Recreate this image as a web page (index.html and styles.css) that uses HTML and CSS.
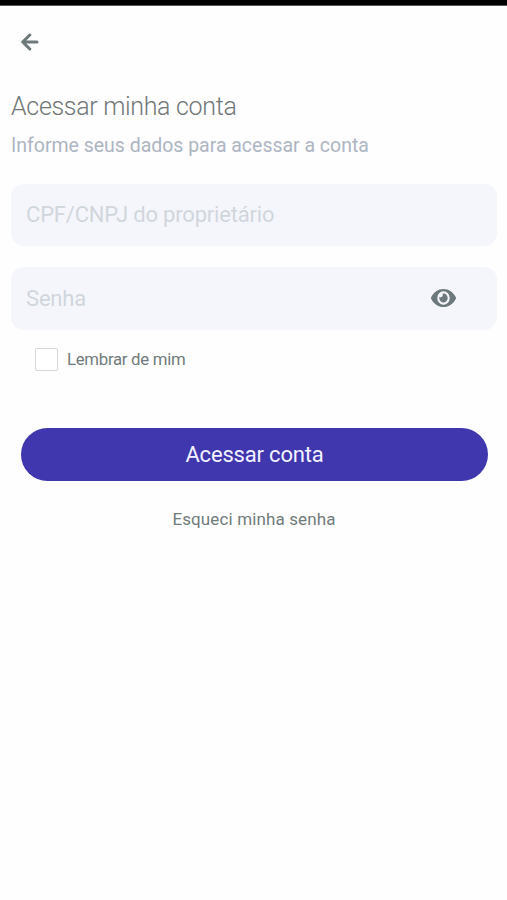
FILE: index.html
```html
<!DOCTYPE html>
<html lang="pt-BR">
<head>
<meta charset="utf-8">
<title>Acessar minha conta</title>
<link rel="stylesheet" href="styles.css">
</head>
<body>
<div class="status-bar"></div>
<main class="screen">
  <button class="back" type="button" aria-label="Voltar">
    <svg width="18" height="18" viewBox="0 0 18 18" fill="none" stroke="currentColor" stroke-width="3" stroke-linecap="round" stroke-linejoin="round"><path d="M8.8 2 1.7 9l7.1 7M2 9h14"/></svg>
  </button>
  <h1 class="title"><span>Acessar minha conta</span></h1>
  <p class="subtitle"><span>Informe seus dados para acessar a conta</span></p>
  <form class="form">
    <div class="field"><input class="input" type="text" placeholder="CPF/CNPJ do proprietário"></div>
    <div class="field field-password">
      <input class="input" type="password" placeholder="Senha">
      <button class="reveal" type="button" aria-label="Mostrar senha">
        <svg width="25" height="24" viewBox="0 0 576 512" preserveAspectRatio="none" fill="currentColor"><path d="M572.52 241.4C518.29 135.59 410.93 64 288 64S57.68 135.64 3.48 241.41a32.35 32.35 0 0 0 0 29.19C57.71 376.41 165.07 448 288 448s230.32-71.64 284.52-177.41a32.35 32.35 0 0 0 0-29.19zM288 400a144 144 0 1 1 144-144 143.93 143.93 0 0 1-144 144zm0-240a95.31 95.31 0 0 0-25.31 3.79 47.85 47.85 0 0 1-66.9 66.9A95.78 95.78 0 1 0 288 160z"/></svg>
      </button>
    </div>
    <label class="remember"><input class="checkbox" type="checkbox"><span>Lembrar de mim</span></label>
    <button class="submit" type="button"><span>Acessar conta</span></button>
    <a class="forgot"><span>Esqueci minha senha</span></a>
  </form>
</main>
</body>
</html>
```
FILE: styles.css
```css
* { box-sizing: border-box; }
body {
  margin: 0;
  background: #fefefe;
  color: #707b7c;
  font-family: Roboto, "Liberation Sans", sans-serif;
}
button { padding: 0; border: 0; background: none; color: inherit; font: inherit; }
svg { display: block; }
.status-bar { height: 6px; background: #000; border-bottom: 1px solid #555; }
.screen { padding: 27px 10px 0 11px; }
.back { display: block; margin-left: 10px; color: #6c7879; }
.title {
  margin: 40px 0 0;
  font-size: 25px;
  font-weight: 300;
  line-height: 32px;
  letter-spacing: -0.32px;
  color: #707777;
}
.subtitle {
  margin: 8px 0 0;
  font-size: 19.5px;
  line-height: 30px;
  letter-spacing: -0.02px;
  color: #adb5c2;
}
.form { display: flex; flex-direction: column; margin-top: 23px; }
.field {
  display: flex;
  align-items: center;
  height: 62px;
  border-radius: 13px;
  background: #f5f6fb;
}
.field-password { height: 63px; margin-top: 21px; padding-right: 41px; }
.input {
  flex: 1;
  min-width: 0;
  height: 100%;
  padding: 0 15px 1px;
  border: 0;
  outline: 0;
  background: none;
  font: 400 22px Roboto, "Liberation Sans", sans-serif;
  letter-spacing: -0.18px;
}
.field-password .input { padding-bottom: 0; }
.input::placeholder { color: #d1d6dd; opacity: 1; }
.reveal { margin-bottom: 2px; color: #6c787b; }
.remember {
  display: flex;
  align-items: center;
  gap: 9px;
  height: 24px;
  margin: 17px 0 0 24px;
  font-size: 16.8px;
  line-height: 22px;
  letter-spacing: -0.29px;
}
.checkbox {
  appearance: none;
  width: 23px;
  height: 23px;
  margin: 0;
  border: 1px solid #d5d7d9;
  border-radius: 2px;
  background: #fff;
}
.submit {
  height: 53px;
  margin: 57px 9px 0 10px;
  border-radius: 27px;
  background: #4037ae;
  color: #f3f1ff;
  font-size: 22px;
  letter-spacing: -0.18px;
}
.forgot {
  margin-top: 26px;
  font-size: 17px;
  line-height: 24px;
  letter-spacing: 0.13px;
  text-align: center;
}
```
